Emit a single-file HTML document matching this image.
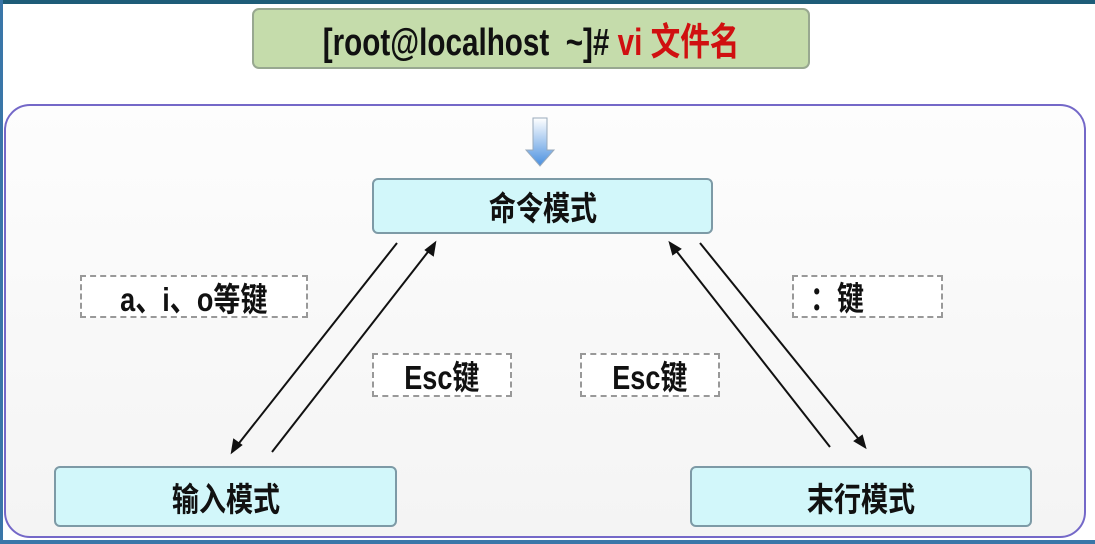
<!DOCTYPE html>
<html><head><meta charset="utf-8"><style>
body{margin:0;width:1095px;height:544px;overflow:hidden;background:#fff;position:relative;font-family:"Liberation Sans","Noto Sans CJK SC",sans-serif;font-weight:bold}
.a{position:absolute;box-sizing:border-box}
.t{display:flex;align-items:center;justify-content:center}
.m{background:#d2f7fa;border:2px solid #7d9aa6;border-radius:6px;font-size:33px;color:#111}
.l{border:2px dashed #999;font-size:33px;color:#111;background:#fff}
.s{display:inline-block;transform:scaleX(0.82)}
</style></head><body>
<div class="a" style="left:0;top:0;width:1095px;height:4px;background:#1e5c78"></div>
<div class="a" style="left:0;top:0;width:3px;height:544px;background:#3a76a8"></div>
<div class="a" style="left:0;top:540px;width:1095px;height:4px;background:#3a76a8"></div>
<div class="a t" style="left:252px;top:8px;width:558px;height:61px;background:#c5dcab;border:2px solid #98a890;border-radius:7px;font-size:38px;color:#111"><span class="s" style="transform:scaleX(0.78)">[root@localhost&nbsp; ~]# <span style="color:#d01010">vi 文件名</span></span></div>
<div class="a" style="left:4px;top:104px;width:1082px;height:434px;border:2px solid #7468c8;border-radius:26px;background:linear-gradient(#fdfdfd,#f4f4f4)"></div>
<svg class="a" style="left:0;top:0" width="1095" height="544">
<defs><linearGradient id="g" x1="0" y1="0" x2="0" y2="1"><stop offset="0" stop-color="#fff"/><stop offset="1" stop-color="#4a90e0"/></linearGradient></defs>
<path d="M533 118h14v32h7l-14 16l-14-16h7z" fill="url(#g)" stroke="#9ab" stroke-width="1"/>
<g stroke="#111" stroke-width="2" fill="#111">
<line x1="397" y1="243" x2="236" y2="447"/><path d="M232 452l2-12l7 5z"/>
<line x1="272" y1="452" x2="431" y2="248"/><path d="M435 243l-2 12l-7-5z"/>
<line x1="830" y1="447" x2="674" y2="248"/><path d="M670 243l10 6l-7 5z"/>
<line x1="700" y1="243" x2="861" y2="442"/><path d="M865 447l-10-6l7-5z"/>
</g></svg>
<div class="a t m" style="left:372px;top:178px;width:341px;height:56px"><span class="s">命令模式</span></div>
<div class="a t m" style="left:54px;top:466px;width:343px;height:61px"><span class="s">输入模式</span></div>
<div class="a t m" style="left:690px;top:466px;width:342px;height:61px"><span class="s">末行模式</span></div>
<div class="a t l" style="left:80px;top:275px;width:228px;height:43px"><span class="s">a、i、o等键</span></div>
<div class="a l" style="left:792px;top:275px;width:151px;height:43px;padding:0 0 0 10px;line-height:43px"><span class="s">：键</span></div>
<div class="a t l" style="left:372px;top:353px;width:140px;height:44px"><span class="s">Esc键</span></div>
<div class="a t l" style="left:580px;top:353px;width:140px;height:44px"><span class="s">Esc键</span></div>
</body></html>
